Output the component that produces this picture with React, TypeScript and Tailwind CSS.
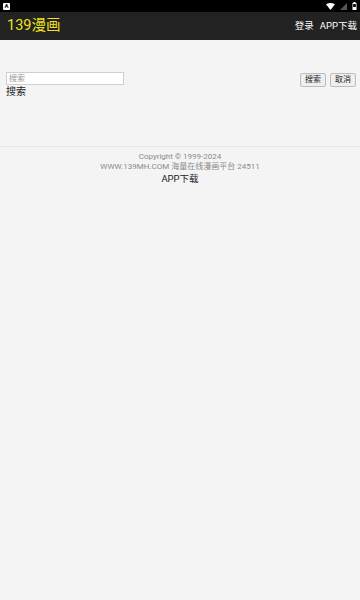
const font = { fontFamily: 'Roboto, "Noto Sans CJK SC", sans-serif' };

function StatusBar() {
  return (
    <div className="h-3 bg-black flex items-center justify-between px-[3px]">
      <div className="w-[7px] h-[7px] bg-white rounded-[1px] flex items-center justify-center">
        <span className="text-[6px] leading-none font-bold text-black">A</span>
      </div>
      <div className="flex items-center gap-[5px]">
        <svg width="9" height="7" viewBox="0 0 9 7">
          <path d="M0 1.2 Q4.5 -1.2 9 1.2 L4.5 7 Z" fill="#fff" />
        </svg>
        <svg width="7" height="7" viewBox="0 0 7 7">
          <path d="M7 0 L7 7 L0 7 Z" fill="#555" />
        </svg>
        <svg width="5" height="8" viewBox="0 0 5 8">
          <rect x="0.5" y="1" width="4" height="7" fill="#fff" />
          <rect x="1.5" y="0" width="2" height="1" fill="#fff" />
          <rect x="1.2" y="2" width="2.6" height="3" fill="#000" />
        </svg>
      </div>
    </div>
  );
}

export default function App() {
  return (
    <div className="w-[360px] h-[600px] bg-[#f4f4f4] overflow-hidden" style={font}>
      <StatusBar />
      <header className="h-[28px] bg-[#222222] flex items-center justify-between pl-[7px] pr-[3px]">
        <span className="text-[14.5px] text-[#f2e21a] leading-none">139漫画</span>
        <div className="flex items-center gap-[6px] text-[9.5px] text-white">
          <span>登录</span>
          <span>APP下载</span>
        </div>
      </header>

      <div className="h-[106px] pt-[32px] px-[6px]">
        <div className="flex justify-between items-start">
          <div>
            <input
              placeholder="搜索"
              className="block w-[118px] h-[13px] bg-white border border-[#cfcfcf] text-[8px] px-[2px] outline-none placeholder:text-[#999]"
            />
            <div className="text-[10px] text-[#222] leading-[14px]">搜索</div>
          </div>
          <div className="flex gap-[4px] pt-px -mr-[2px]">
            <button className="h-[14px] px-[4px] text-[8px] leading-none bg-[#efefef] border border-[#bdbdbd] rounded-[2px] text-[#222]">
              搜索
            </button>
            <button className="h-[14px] px-[4px] text-[8px] leading-none bg-[#efefef] border border-[#bdbdbd] rounded-[2px] text-[#222]">
              取消
            </button>
          </div>
        </div>
      </div>

      <div className="border-t border-[#e6e6e6] pt-[5px] text-center">
        <div className="text-[8px] leading-[10px] text-[#8a8a8a]">Copyright © 1999-2024</div>
        <div className="text-[8px] leading-[10px] text-[#8a8a8a]">WWW.139MH.COM 海量在线漫画平台 24511</div>
        <div className="text-[9.5px] leading-[14px] text-[#222]">APP下载</div>
      </div>
    </div>
  );
}
